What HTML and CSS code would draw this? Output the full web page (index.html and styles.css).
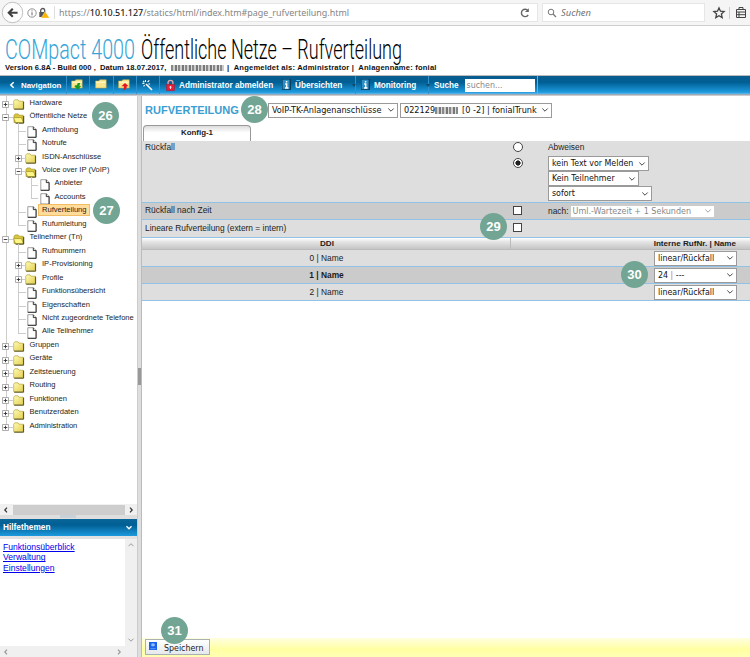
FILE: index.html
```html
<!DOCTYPE html>
<html lang="de">
<head>
<meta charset="utf-8">
<title>COMpact 4000</title>
<link rel="stylesheet" href="styles.css">
</head>
<body>
<svg class="defs" aria-hidden="true">
  <defs>
    <linearGradient id="fold" x2="1" y2="1"><stop offset="0" stop-color="#fffbb8"/><stop offset="1" stop-color="#e3cf4e"/></linearGradient>
    <symbol id="folder" viewBox="0 0 12 11"><path d="M.7 2.2 1.8.8h3.2l1 1.4h4.2v7.6H.7z" fill="url(#fold)" stroke="#b5a63c" stroke-width=".7"/><path d="M10.6 2.6v7.6H1.2" fill="none" stroke="#55501c"/></symbol>
    <symbol id="open" viewBox="0 0 12 11"><path d="M1 9.5V2.2L2.2.9h3l1 1.3h4v7.3z" fill="#d9c63e" stroke="#9b8c24" stroke-width=".6"/><path d="M.5 4.6h8l2 5.3H2.6z" fill="#fff685" stroke="#8a7d20" stroke-width=".6"/><path d="M10.7 3v7.1H2.6" fill="none" stroke="#45400f"/></symbol>
    <symbol id="doc" viewBox="0 0 10 12"><path d="M.8.7h5.6l2.7 2.8v7.8H.8z" fill="#fff" stroke="#777" stroke-width=".7"/><path d="M6.3.8v2.8h2.8v7.7H.8" fill="none" stroke="#222" stroke-width=".9"/></symbol>
    <symbol id="plus" viewBox="0 0 7 7"><path d="M.5.5h6v6h-6z" fill="#fff" stroke="#999" stroke-width=".8"/><path d="M1.7 3.5h3.6M3.5 1.7v3.6" stroke="#333" stroke-width=".9"/></symbol>
    <symbol id="minus" viewBox="0 0 7 7"><path d="M.5.5h6v6h-6z" fill="#fff" stroke="#999" stroke-width=".8"/><path d="M1.7 3.5h3.6" stroke="#333" stroke-width=".9"/></symbol>
    <symbol id="chev" viewBox="0 0 8 6"><path d="m1.3 1.5 2.7 2.7 2.7-2.7" fill="none" stroke="currentColor" stroke-width=".9"/></symbol>
    <symbol id="info" viewBox="0 0 10 12"><path d="M0 0h9v11H0z" fill="#0b3c5c"/><path d="M.6.6h7v9.6h-7z" fill="#2d8fc4"/><path d="M4.6 2v1.5M3.1 5h1.6v4M3 9h3.4" stroke="#fff" stroke-width="1.4" fill="none"/></symbol>
    <symbol id="tool-folder" viewBox="0 0 12 12"><path d="M.6 2h3.2L4.8.8h6.4V9H.6z" fill="#f7e790" stroke="#c9a83d" stroke-width=".6"/><path d="M1 3.2h10" stroke="#fffbd2"/></symbol>
  </defs>
</svg>

<header class="browser">
  <svg class="back" viewBox="0 0 24 24"><circle cx="12" cy="12" r="10.7" fill="#fcfcfc" stroke="#bdbdbd"/><path d="M17.3 12.3H9M12.3 8l-4.2 4.3 4.2 4.2" fill="none" stroke="#3f3f3f" stroke-width="2.2"/></svg>
  <div class="address">
    <svg class="site" viewBox="0 0 24 12"><circle cx="5" cy="6" r="4.2" fill="none" stroke="#777" stroke-width=".8"/><path d="M5 5.3v3.1M5 3.4v1" stroke="#666"/><path d="M13.7 5V3.5a2 2 0 0 1 4 0V5" fill="none" stroke="#555" stroke-width="1.3"/><path d="M12.3 5h6.5v5h-6.5z" fill="#555"/><path d="m18.2 4.6 4.4 6.4h-8.5z" fill="#ffb400" stroke="#fff" stroke-width=".4"/></svg>
    <span class="url">https://<b>10.10.51.127</b>/statics/html/index.htm#page_rufverteilung.html</span>
    <svg class="reload" viewBox="0 0 12 12"><path d="M9 3.6A3.7 3.7 0 1 0 9.2 8" fill="none" stroke="#666" stroke-width="1.4"/><path d="M9.8 1.3V5H6z" fill="#666"/></svg>
  </div>
  <div class="find"><svg viewBox="0 0 10 10"><circle cx="4" cy="4" r="2.8" fill="none" stroke="#777"/><path d="m6 6 3 3" stroke="#777" stroke-width="1.3"/></svg><i>Suchen</i></div>
  <svg class="marks" viewBox="0 0 36 14"><path d="m7 1.9 1.5 3.3 3.6.4-2.7 2.4.8 3.6L7 9.8l-3.2 1.8.8-3.6-2.7-2.4 3.6-.4z" fill="none" stroke="#444" stroke-width="1.3"/><path d="M17.5 1v12" stroke="#ccc"/><path d="M24.5 3.5h9v8h-9zM27 3.5v-2h4v2M24.5 6h9M24.5 8.7h9M27 6v5" fill="none" stroke="#444"/></svg>
</header>

<section class="banner">
  <svg class="title" viewBox="0 0 410 36"><text class="brand" x="5" y="30.5" textLength="130" lengthAdjust="spacingAndGlyphs">COMpact 4000</text><text class="page" x="141" y="30.5" textLength="261" lengthAdjust="spacingAndGlyphs">Öffentliche Netze – Rufverteilung</text></svg>
  <div class="version"><span class="build">Version 6.8A - Build 000 ,&nbsp; Datum 18.07.2017,</span><span class="smudge"></span><span class="login">|&nbsp; Angemeldet als: Administrator |&nbsp; Anlagenname: fonial</span></div>
</section>

<nav class="toolbar">
  <div class="item nav"><svg viewBox="0 0 6 8"><path d="M4.7 1.2 1.8 4l2.9 2.8" fill="none" stroke="#fff" stroke-width="1.5"/></svg>Navigation</div>
  <div class="item i1"><svg viewBox="0 0 12 12"><use href="#tool-folder"/><path d="M4.3 6.3h1.6l.8-2.4h2.6L8.4 6.9h1.7L6.8 10.9 3.4 7.3z" fill="#199a22"/></svg></div>
  <div class="item i2"><svg viewBox="0 0 12 12"><use href="#tool-folder"/></svg></div>
  <div class="item i3"><svg viewBox="0 0 12 12"><use href="#tool-folder"/><path d="M3.4 7.3 7 4l3.6 3.3H8.8c0 2.2-1 3.4-3.9 4.1 1-1.2 1.1-2.3.9-4.1z" fill="#e31522"/></svg></div>
  <div class="item i4"><svg viewBox="0 0 12 12"><path d="m5 5 6 6" stroke="#fff" stroke-width="1.6"/><path d="M4.5 1v2M1.4 4.4h2M2 1.8l1.3 1.3M6.6 3l1.7-1.7M7.3 5h1.8M2.6 7.3l1-1.2" stroke="#fff" stroke-width="1.1"/></svg></div>
  <div class="item logout"><svg viewBox="0 0 10 13"><path d="M2.3 5.5V3.3a2.7 2.5 0 0 1 5.4 0v2.2" fill="none" stroke="#e4a8a8" stroke-width="1.5"/><path d="M.7 5.3h8.6v6.9H.7z" fill="#ee1c36" stroke="#b01028" stroke-width=".6"/><path d="M5 7v3.4M3.7 8.3h2.6" stroke="#fff" stroke-width=".9"/></svg>Administrator abmelden</div>
  <div class="item over"><svg viewBox="0 0 10 12"><use href="#info"/></svg>Übersichten<em></em></div>
  <div class="item moni"><svg viewBox="0 0 10 12"><use href="#info"/></svg>Monitoring<em></em></div>
  <div class="item such">Suche<span class="field">suchen...</span></div>
</nav>

<main class="frame">
  <aside class="side">
    <div class="tree" id="tree"></div>
    <div class="hscroll"><svg viewBox="0 0 6 8"><path d="M4 1.7 1.8 4 4 6.3"/></svg><b></b><svg viewBox="0 0 6 8"><path d="M2 1.7 4.2 4 2 6.3"/></svg></div>
    <div class="grip"><i></i></div>
    <div class="helphead">Hilfethemen<svg viewBox="0 0 8 6"><path d="m1.5 1.3 2.5 2.5 2.5-2.5" fill="none" stroke="#fff" stroke-width="1.4"/></svg></div>
    <div class="help">
      <div class="links"><a href="#">Funktionsüberblick</a><a href="#">Verwaltung</a><a href="#">Einstellungen</a></div>
      <div class="vscroll"><svg viewBox="0 0 8 6"><path d="M1.5 4.2 4 1.7l2.5 2.5"/></svg><svg viewBox="0 0 8 6"><path d="M1.5 1.7 4 4.2l2.5-2.5"/></svg></div>
    </div>
    <div class="hscroll light"><svg viewBox="0 0 6 8"><path d="M4 1.7 1.8 4 4 6.3"/></svg><svg viewBox="0 0 6 8"><path d="M2 1.7 4.2 4 2 6.3"/></svg></div>
  </aside>
  <div class="splitter"><i></i></div>
  <section class="content">
    <div class="headline">
      <h1>RUFVERTEILUNG</h1>
      <div class="select s1"><span>VoIP-TK-Anlagenanschlüsse</span><svg><use href="#chev"/></svg></div>
      <div class="select s2"><span>022129</span><span class="smudge"></span><span>[0 -2] | fonialTrunk</span><svg><use href="#chev"/></svg></div>
    </div>
    <div class="tab">Konfig-1</div>
    <div class="row fallback">
      <div class="label">Rückfall</div>
      <div class="ctl"><i class="radio"></i><i class="radio on"></i></div>
      <div class="opts">
        <span class="lbl">Abweisen</span>
        <div class="select s3"><span>kein Text vor Melden</span><svg><use href="#chev"/></svg></div>
        <div class="select s4"><span>Kein Teilnehmer</span><svg><use href="#chev"/></svg></div>
        <div class="select s5"><span>sofort</span><svg><use href="#chev"/></svg></div>
      </div>
    </div>
    <div class="row dark time">
      <div class="label">Rückfall nach Zeit</div><div class="ctl"><i class="check"></i></div>
      <div class="opts inline"><span>nach:</span><div class="select off s6"><span>Uml.-Wartezeit + 1 Sekunden</span><svg><use href="#chev"/></svg></div></div>
    </div>
    <div class="row line"><div class="label">Lineare Rufverteilung (extern = intern)</div><div class="ctl"><i class="check"></i></div></div>
    <div class="thead"><div>DDI</div><div>Interne RufNr. | Name</div></div>
    <div class="row ddi"><div>0 | Name</div><div class="select s7"><span>linear/Rückfall</span><svg><use href="#chev"/></svg></div></div>
    <div class="row ddi dark bold"><div>1 | Name</div><div class="select s7"><span>24 <u>|</u> ---</span><svg><use href="#chev"/></svg></div></div>
    <div class="row ddi"><div>2 | Name</div><div class="select s7"><span>linear/Rückfall</span><svg><use href="#chev"/></svg></div></div>
    <div class="footer"><div class="save"><svg viewBox="0 0 9 9"><path d="M0 0h9v9H0z" fill="#1764e8"/><path d="M3 2h3v2.5H3zM1.5 7.5h6" fill="#9cc6ff" stroke="#8fbaff" stroke-width=".7"/></svg><span>Speichern</span></div></div>
  </section>
</main>
<div class="badge b26">26</div><div class="badge b27">27</div><div class="badge b28">28</div>
<div class="badge b29">29</div><div class="badge b30">30</div><div class="badge b31">31</div>
<script src="tree.js"></script>
</body>
</html>
```
FILE: styles.css
```css
* { box-sizing: border-box; }
body { margin: 0; width: 750px; height: 657px; overflow: hidden; position: relative; display: flex; flex-direction: column; background: #fff; font: 8.4px "Liberation Sans", Arial, sans-serif; color: #1c1c1c; white-space: nowrap; }
.defs { position: absolute; width: 0; height: 0; }
svg { flex: none; display: block; }
.smudge { display: inline-block; filter: blur(.7px); background: repeating-linear-gradient(90deg, #888 0 2px, #ccc 2px 4px, #777 4px 6px, #ddd 6px 7px); }

.browser { height: 26px; flex: none; display: flex; align-items: center; background: #f5f5f5; border-bottom: 1px solid #cfcfcf; padding-left: 1px; }
.back { width: 23px; height: 23px; margin-right: -12px; z-index: 1; }
.address { width: 526px; height: 19px; background: #fff; border: 1px solid #e6e6e6; display: flex; align-items: center; padding: 0 6px 0 14px; }
.site { width: 24px; height: 12px; }
.url { flex: 1; margin-left: 3px; border-left: 1px solid #ddd; padding-left: 4px; font: 8.95px/13px "Noto Sans", sans-serif; color: #858585; }
.url b { font-weight: 500; color: #222; }
.reload { width: 12px; height: 12px; }
.find { margin-left: 4px; width: 163px; height: 19px; background: #fff; border: 1px solid #e6e6e6; display: flex; align-items: center; padding-left: 4px; gap: 4px; font: 9.4px "Noto Sans", sans-serif; color: #747474; }
.find svg { width: 10px; height: 10px; }
.marks { width: 36px; height: 14px; margin-left: 7px; }

.banner { height: 49px; flex: none; }
.title { width: 410px; height: 36px; margin-top: 2px; overflow: visible; }
.title text { font-family: Roboto, sans-serif; font-weight: 300; font-size: 27.5px; }
.brand { fill: #39a4d8; }
.page { fill: #000; }
.version { font-size: 7.6px; font-weight: bold; line-height: 9px; margin-top: -1px; padding-left: 5px; display: flex; align-items: center; color: #111; }
.version .smudge { width: 53px; height: 6px; margin: 0 3px 0 4px; }
.build { width: 162px; }
.build { letter-spacing: .03px; }
.login { letter-spacing: .19px; }

.toolbar { height: 20px; flex: none; display: flex; border-top: 1px solid #bbb; border-bottom: 1px solid #9ab; background: linear-gradient(#0b5d8f, #005f94 35%, #1d9ade 90%, #68b9ea); color: #fff; font-size: 8.2px; font-weight: bold; }
.item { display: flex; align-items: center; height: 18px; border-right: 1px solid #3191cc; }
.item svg { width: 12px; height: 12px; }
.item em { margin-left: 7px; border: 2px solid transparent; border-top: 3px solid #164866; border-bottom: 0; }
.item.nav { width: 67px; padding-left: 9px; gap: 6px; font-size: 7.9px; }
.item.nav svg { width: 6px; height: 8px; }
.i1 { width: 23px; padding-left: 4px; }
.i2 { width: 24px; padding-left: 5px; }
.i3 { width: 23px; padding-left: 4px; }
.i4 { width: 23px; padding-left: 4px; }
.logout { width: 118px; padding-left: 6px; gap: 4px; border-right: 0; }
.item.logout svg { width: 9px; height: 13px; }
.over { width: 78px; padding-left: 4px; gap: 3px; }
.item.over svg, .item.moni svg { width: 10px; }
.moni { width: 73px; padding-left: 5px; gap: 3px; }
.such { padding-left: 5px; gap: 6px; border-right: 1px solid #8aa5b5; width: 109px; padding-right: 2px; }
.field { flex: 1; height: 13px; background: #fff; color: #888; font: 8.8px/13px "DejaVu Sans Condensed", sans-serif; padding-left: 2px; }

.frame { flex: 1; min-height: 0; display: flex; border-top: 1px solid #ccc; }
.side { width: 137px; display: flex; flex-direction: column; }
.tree { height: 408px; overflow: hidden; font-size: 7.55px; }
.node { height: 13.46px; display: flex; align-items: center; }
.rail { width: 12.5px; height: 13.46px; position: relative; flex: none; }
.rail.v::before { content: ""; position: absolute; left: 5.5px; top: 0; height: 13.5px; border-left: 1px solid #ccc; }
.rail.end::before { height: 9px; }
.rail.h::after { content: ""; position: absolute; left: 6px; top: 8px; width: 7px; border-top: 1px solid #ccc; }
.rail svg { position: relative; z-index: 1; width: 7px; height: 7px; margin: 5px 0 0 2px; }
.node .ico { width: 12px; height: 11px; margin: 4px 5px 0 0; }
.node .page-ico { width: 10px; height: 12px; margin: 4px 5px 0 2px; }
.node .name { line-height: 10px; padding-bottom: 0; }
.node.sel .name { background: #ffdc9b; border: 1px solid #f1bd63; margin-left: -4px; padding: 0 3px; }
.hscroll { height: 11px; background: #f0f0f0; display: flex; align-items: center; justify-content: space-between; padding: 0 3px; width: 137px; }
.hscroll b { width: 112px; height: 10px; background: #cdcdcd; }
.hscroll svg { width: 6px; height: 8px; stroke: #333; fill: none; stroke-width: 1.2; }
.hscroll.light { padding-right: 15px; }
.hscroll.light svg, .vscroll svg { stroke: #999; fill: none; }
.grip { height: 4px; background: #dedede; }
.grip i { display: block; width: 16px; height: 3px; margin-left: 60px; background: #c9d0d8; }
.helphead { height: 17px; background: linear-gradient(#0b6598, #005f94 35%, #1d9ade); color: #fff; font-weight: bold; font-size: 8.3px; display: flex; align-items: center; justify-content: space-between; padding: 0 4px 2px 3px; }
.helphead svg { width: 8px; height: 6px; position: relative; top: 1px; }
.help { flex: 1; display: flex; border-top: 3px solid #e2e2e2; }
.links { flex: 1; padding: 3px; display: flex; flex-direction: column; align-items: flex-start; }
.links a { color: #00e; font-size: 8.6px; line-height: 10.4px; }
.vscroll { width: 12px; background: #f0f0f0; display: flex; flex-direction: column; align-items: center; justify-content: space-between; padding: 3px 0; }
.vscroll svg { width: 8px; height: 6px; }
.splitter { width: 5px; background: #dedede; border-right: 1px solid #bbb; border-left: 1px solid #ccc; display: flex; align-items: center; }
.splitter i { width: 3px; height: 17px; background: #999; }

.content { flex: 1; min-width: 0; display: flex; flex-direction: column; }
.headline { height: 29px; flex: none; display: flex; align-items: center; padding: 0 0 1px 3px; }
h1 { margin: 0; width: 123px; font-size: 11.05px; color: #3b9ed2; }
.select { height: 15px; flex: none; background: #fff; border: 1px solid #9a9a9a; color: #111; display: flex; align-items: center; padding: 0 2px 0 3px; font: 8.8px/13px "DejaVu Sans Condensed", sans-serif; }
.select svg { width: 8px; height: 6px; margin-left: auto; color: #333; }
.select u { text-decoration: none; color: #c77b22; }
.headline .select { font-size: 9.05px; }
.s1 { width: 130px; margin-right: 2px; }
.s2 { width: 152px; }
.s2 .smudge { width: 23px; height: 7px; margin-right: 4px; }
.s3 { width: 101px; }
.s4 { width: 91px; }
.s5 { width: 104px; }
.s6 { width: 145px; }
.s7 { width: 83px; margin-left: 3px; }
.select.off { color: #888; border-color: #ccc; height: 13px; font-size: 8.95px; padding-left: 2px; }
.off svg { color: #999; }
.tab { width: 108px; height: 16px; flex: none; margin-left: 1px; border: 1px solid #999; border-bottom: 0; border-radius: 4px 4px 0 0; background: linear-gradient(#ddd, #fff 45%); text-align: center; font-weight: bold; line-height: 14px; font-size: 7.9px; }
.row { flex: none; display: flex; align-items: center; background: #dedede; border-bottom: 1px solid #91c3e6; height: 17px; }
.row.dark { background: #cbcbcb; }
.label { width: 371px; padding-left: 3px; }
.ctl { width: 35px; display: flex; flex-direction: column; }
.fallback { height: 62px; align-items: flex-start; }
.fallback .label, .lbl { line-height: 13px; }
.fallback .ctl { gap: 6px; padding-top: 1px; }
.fallback .opts { margin-bottom: -1px; }
.opts { display: flex; flex-direction: column; }
.lbl { height: 15px; }
.opts.inline { flex-direction: row; align-items: center; gap: 1px; }
.radio { width: 10px; height: 10px; border: 1px solid #444; border-radius: 50%; background: #fff; }
.radio.on { background: radial-gradient(circle, #222 0 2.3px, #fff 2.9px); }
.check { width: 9px; height: 9px; border: 1px solid #444; background: #fff; }
.time .label { padding-bottom: 2px; }
.time .ctl { padding-bottom: 1px; }
.line { height: 18px; padding-bottom: 2px; }
.thead { height: 12px; flex: none; display: flex; font-weight: bold; line-height: 12px; text-align: center; background: linear-gradient(#fff, #e4e4e4 35%, #c5c5c5); border-bottom: 1px solid #bbb; font-size: 8.1px; }
.thead div:first-child { width: 369px; border-right: 1px solid #bbb; padding-left: 2px; }
.thead div:last-child { width: 239px; text-align: right; padding-right: 14px; }
.ddi > div:first-child { width: 509px; padding-right: 140px; text-align: center; }
.bold { font-weight: bold; }
.footer { height: 19px; flex: none; margin-top: auto; background: linear-gradient(#ffffdf, #ffffa2 60%, #ffffb5); padding: 1px 0 0 3px; }
.save { width: 65px; height: 16px; border: 1px solid #a9b0b6; background: linear-gradient(#fff, #e5e9eb); display: flex; align-items: center; gap: 7px; padding-left: 3px; font: 8.8px/13px "DejaVu Sans Condensed", sans-serif; }
.save svg { width: 8px; height: 8px; margin-bottom: 3px; }
.save span { padding-top: 2px; }

.badge { position: absolute; width: 27px; height: 27px; border-radius: 50%; background: #72a593; color: #fff; text-align: center; font: bold 13px/27px "Liberation Sans", Arial, sans-serif; }
.b26 { left: 92px; top: 102px; }
.b27 { left: 93px; top: 197px; }
.b28 { left: 241px; top: 96px; }
.b29 { left: 480px; top: 213px; }
.b30 { left: 621px; top: 261px; }
.b31 { left: 161px; top: 617px; }
```
FILE: tree.js
```js
// Each entry: level, kind, label. "last" closes the guide line of its level.
const nodes = [
  [0, "plus", "Hardware"], [0, "minus", "Öffentliche Netze"],
  [1, "doc", "Amtholung"], [1, "doc", "Notrufe"], [1, "plus", "ISDN-Anschlüsse"],
  [1, "minus", "Voice over IP (VoIP)"], [2, "doc", "Anbieter"], [2, "doc", "Accounts", "last"],
  [1, "doc", "Rufverteilung", "sel"], [1, "doc", "Rufumleitung", "last"],
  [0, "minus", "Teilnehmer (Tn)"], [1, "doc", "Rufnummern"], [1, "plus", "IP-Provisioning"],
  [1, "plus", "Profile"], [1, "doc", "Funktionsübersicht"], [1, "doc", "Eigenschaften"],
  [1, "doc", "Nicht zugeordnete Telefone"], [1, "doc", "Alle Teilnehmer", "last"],
  [0, "plus", "Gruppen"], [0, "plus", "Geräte"], [0, "plus", "Zeitsteuerung"],
  [0, "plus", "Routing"], [0, "plus", "Funktionen"], [0, "plus", "Benutzerdaten"],
  [0, "plus", "Administration", "last"]
];
document.getElementById("tree").innerHTML = nodes.map(([level, kind, label, flag]) => {
  const rails = '<div class="rail v"></div>'.repeat(level);
  const toggle = kind === "doc" ? "" : `<svg><use href="#${kind}"/></svg>`;
  const own = `<div class="rail v h ${flag === "last" ? "end" : ""}">${toggle}</div>`;
  const icon = kind === "doc" ? '<svg class="page-ico"><use href="#doc"/></svg>'
    : `<svg class="ico"><use href="#${kind === "plus" ? "folder" : "open"}"/></svg>`;
  return `<div class="node ${flag === "sel" ? "sel" : ""}">${rails}${own}${icon}<span class="name">${label}</span></div>`;
}).join("");
```
